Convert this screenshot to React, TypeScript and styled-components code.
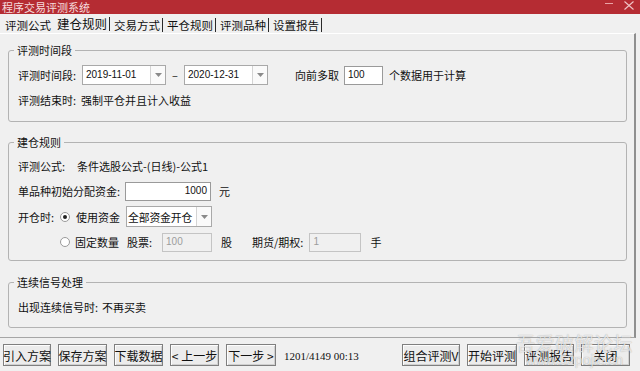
import React from "react"
import styled, { createGlobalStyle } from "styled-components"

const GlobalStyle = createGlobalStyle`
  html, body {
    margin: 0;
    padding: 0;
    background: #f0f0f0;
  }
  body {
    font-family: "Noto Sans CJK SC", "Noto Sans", sans-serif;
    font-size: 11px;
    color: #111;
  }
`

const TABS = ["评测公式", "建仓规则", "交易方式", "平仓规则", "评测品种", "设置报告"]

const Arrow = () => (
  <svg width="7" height="4" viewBox="0 0 7 4">
    <path d="M0 0 L7 0 L3.5 4 Z" fill="#8a8a8a" />
  </svg>
)

const App: React.FC = () => {
  return (
    <S.Window>
      <GlobalStyle />
      <S.TitleBar>
        <S.Title>程序交易评测系统</S.Title>
        <S.Minimize />
        <svg width="10" height="9" viewBox="0 0 10 9">
          <path d="M0.5 0.5 L9.5 8.5 M9.5 0.5 L0.5 8.5" stroke="#f1c4c6" strokeWidth="1.1" />
        </svg>
      </S.TitleBar>

      <S.TabStrip>
        {TABS.map((t, i) => (
          <S.Tab key={t} $active={i === 1} $sep={i >= 1}>
            {t}
          </S.Tab>
        ))}
      </S.TabStrip>

      <S.Panel>
        <S.Group>
          <S.Legend>评测时间段</S.Legend>
          <S.GroupBody $pt={8} $pb={14} $gap={8}>
            <S.Row $h={20}>
              <S.Label $w={64}>评测时间段:</S.Label>
              <S.Combo $w={84}>
                <S.ComboText>2019-11-01</S.ComboText>
                <S.ComboButton>
                  <Arrow />
                </S.ComboButton>
              </S.Combo>
              <S.Dash>–</S.Dash>
              <S.Combo $w={84}>
                <S.ComboText>2020-12-31</S.ComboText>
                <S.ComboButton>
                  <Arrow />
                </S.ComboButton>
              </S.Combo>
              <S.Text $ml={27}>向前多取</S.Text>
              <S.Input $w={39} $ml={5}>100</S.Input>
              <S.Text $ml={6}>个数据用于计算</S.Text>
            </S.Row>
            <S.Row $h={14}>
              <S.Label $w={63}>评测结束时:</S.Label>
              <S.Text>强制平仓并且计入收益</S.Text>
            </S.Row>
          </S.GroupBody>
        </S.Group>

        <S.Group $mt={13}>
          <S.Legend>建仓规则</S.Legend>
          <S.GroupBody $pt={7} $pb={8} $gap={5}>
            <S.Row $h={20}>
              <S.Label $w={59}>评测公式:</S.Label>
              <S.Text>条件选股公式-(日线)-公式1</S.Text>
            </S.Row>
            <S.Row $h={20}>
              <S.Label $w={107}>单品种初始分配资金:</S.Label>
              <S.Input $w={86} $right>1000</S.Input>
              <S.Text $ml={8}>元</S.Text>
            </S.Row>
            <S.Row $h={21}>
              <S.Label $w={42}>开仓时:</S.Label>
              <S.Radio $checked />
              <S.Text $ml={6}>使用资金</S.Text>
              <S.Combo $w={86} $ml={6}>
                <S.ComboText $cjk>全部资金开仓</S.ComboText>
                <S.ComboButton>
                  <Arrow />
                </S.ComboButton>
              </S.Combo>
            </S.Row>
            <S.Row $h={20}>
              <S.Label $w={42} />
              <S.Radio />
              <S.Text $ml={5}>固定数量</S.Text>
              <S.Text $ml={8}>股票:</S.Text>
              <S.Input $w={50} $ml={10} $disabled>100</S.Input>
              <S.Text $ml={9}>股</S.Text>
              <S.Text $ml={20}>期货/期权:</S.Text>
              <S.Input $w={52} $ml={6} $disabled>1</S.Input>
              <S.Text $ml={9}>手</S.Text>
            </S.Row>
          </S.GroupBody>
        </S.Group>

        <S.Group $mt={14}>
          <S.Legend>连续信号处理</S.Legend>
          <S.GroupBody $pt={11} $pb={13} $gap={0}>
            <S.Row $h={14}>
              <S.Label $w={84}>出现连续信号时:</S.Label>
              <S.Text>不再买卖</S.Text>
            </S.Row>
          </S.GroupBody>
        </S.Group>
      </S.Panel>

      <S.BottomBar>
        <S.Button $w={48}>引入方案</S.Button>
        <S.Button $w={49}>保存方案</S.Button>
        <S.Button $w={49}>下载数据</S.Button>
        <S.Button $w={49}>&lt; 上一步</S.Button>
        <S.Button $w={50}>下一步 &gt;</S.Button>
        <S.Counter>1201/4149 00:13</S.Counter>
        <S.Spacer />
        <S.Button $w={58}>组合评测V</S.Button>
        <S.Button $w={50}>开始评测</S.Button>
        <S.Button $w={50}>评测报告</S.Button>
        <S.Button $w={49}>关闭</S.Button>
      </S.BottomBar>

      <S.Watermark aria-hidden>
        <S.WatermarkBig>吾爱破解论坛</S.WatermarkBig>
        <S.WatermarkSmall>www.52pojie.cn</S.WatermarkSmall>
      </S.Watermark>
    </S.Window>
  )
}

const S = {
  Window: styled.div`
    position: relative;
    width: 640px;
    height: 371px;
    display: flex;
    flex-direction: column;
    overflow: hidden;
    background: #f0f0f0;
  `,
  TitleBar: styled.div`
    height: 14px;
    flex: none;
    display: flex;
    align-items: center;
    padding: 0 6px 0 2px;
    background: #b52c33;
    color: #f6dcdd;
    font-size: 11px;
    line-height: 14px;
    svg {
      margin-top: -4px;
      margin-left: 11px;
    }
  `,
  Title: styled.div`
    flex: 1;
    margin-top: -1px;
  `,
  Minimize: styled.div`
    width: 8px;
    height: 1px;
    margin-top: -7px;
    background: #eaa3a6;
  `,
  TabStrip: styled.div`
    height: 19px;
    flex: none;
    display: flex;
    align-items: center;
    padding: 2px 0 0 1px;
    box-sizing: border-box;
  `,
  Tab: styled.div<{ $active?: boolean; $sep?: boolean }>`
    height: 14px;
    line-height: 14px;
    font-size: ${(p) => (p.$active ? "12.5px" : "11.5px")};
    padding: 0 2px 0 4px;
    margin-top: ${(p) => (p.$active ? "-2px" : "0")};
    border-right: ${(p) => (p.$sep ? "1px solid #2a2a2a" : "none")};
    color: #111;
    white-space: nowrap;
  `,
  Panel: styled.div`
    flex: 1;
    display: flex;
    flex-direction: column;
    margin-right: 4px;
    padding: 9px 7px 0 8px;
    border-top: 1px solid #ffffff;
    border-bottom: 1px solid #a6a6a6;
    border-right: 2px solid #8f8f8f;
  `,
  Group: styled.fieldset<{ $mt?: number }>`
    margin: ${(p) => p.$mt ?? 0}px 0 0 0;
    padding: 0 9px;
    border: 1px solid #b3b3b3;
    border-radius: 3px;
    min-width: 0;
  `,
  Legend: styled.legend`
    margin-left: -4px;
    padding: 0 3px;
    font-size: 11px;
    line-height: 14px;
    color: #111;
  `,
  GroupBody: styled.div<{ $pt: number; $pb: number; $gap: number }>`
    display: flex;
    flex-direction: column;
    gap: ${(p) => p.$gap}px;
    padding: ${(p) => p.$pt}px 0 ${(p) => p.$pb}px;
  `,
  Row: styled.div<{ $h: number }>`
    display: flex;
    align-items: center;
    height: ${(p) => p.$h}px;
    line-height: 14px;
    white-space: nowrap;
  `,
  Label: styled.span<{ $w: number }>`
    width: ${(p) => p.$w}px;
    flex: none;
  `,
  Text: styled.span<{ $ml?: number }>`
    margin-left: ${(p) => p.$ml ?? 0}px;
  `,
  Dash: styled.span`
    width: 18px;
    text-align: center;
  `,
  Combo: styled.div<{ $w: number; $ml?: number }>`
    width: ${(p) => p.$w}px;
    height: 100%;
    margin-left: ${(p) => p.$ml ?? 0}px;
    box-sizing: border-box;
    display: flex;
    border: 1px solid #a9a9a9;
    background: #ffffff;
  `,
  ComboText: styled.span<{ $cjk?: boolean }>`
    flex: 1;
    min-width: 0;
    display: flex;
    align-items: center;
    padding-left: ${(p) => (p.$cjk ? 1 : 3)}px;
    font-family: ${(p) => (p.$cjk ? `"Noto Sans CJK SC", sans-serif` : `"Liberation Sans", Arial, sans-serif`)};
    font-size: ${(p) => (p.$cjk ? 10.8 : 10)}px;
    letter-spacing: ${(p) => (p.$cjk ? "-0.1px" : "0")};
  `,
  ComboButton: styled.span`
    width: 14px;
    flex: none;
    display: flex;
    align-items: center;
    justify-content: center;
    border-left: 1px solid #d4d4d4;
    background: #fafafa;
  `,
  Input: styled.div<{ $w: number; $ml?: number; $right?: boolean; $disabled?: boolean }>`
    width: ${(p) => p.$w}px;
    height: 19px;
    margin-left: ${(p) => p.$ml ?? 0}px;
    box-sizing: border-box;
    display: flex;
    align-items: center;
    justify-content: ${(p) => (p.$right ? "flex-end" : "flex-start")};
    padding: 0 3px;
    border: 1px solid ${(p) => (p.$disabled ? "#c4c4c4" : "#9a9a9a")};
    background: ${(p) => (p.$disabled ? "#f0f0f0" : "#ffffff")};
    color: ${(p) => (p.$disabled ? "#9c9c9c" : "#111")};
    font-family: "Liberation Sans", Arial, sans-serif;
    font-size: 10px;
    overflow: hidden;
  `,
  Radio: styled.span<{ $checked?: boolean }>`
    width: 10px;
    height: 10px;
    flex: none;
    box-sizing: border-box;
    border-radius: 50%;
    border: 1px solid #9a9a9a;
    background: #ffffff;
    display: flex;
    align-items: center;
    justify-content: center;
    &::after {
      content: "";
      width: 4px;
      height: 4px;
      border-radius: 50%;
      background: ${(p) => (p.$checked ? "#222" : "transparent")};
    }
  `,
  BottomBar: styled.div`
    height: 33px;
    flex: none;
    display: flex;
    align-items: flex-start;
    gap: 7px;
    padding: 6px 10px 0 3px;
    box-sizing: border-box;
  `,
  Button: styled.div<{ $w: number }>`
    width: ${(p) => p.$w}px;
    height: 22px;
    flex: none;
    box-sizing: border-box;
    display: flex;
    align-items: center;
    justify-content: center;
    border: 1px solid #7f7f7f;
    background: #ececec;
    box-shadow: inset 1px 1px #fdfdfd, inset -1px -1px #d0d0d0;
    font-size: 12px;
    white-space: nowrap;
    color: #111;
  `,
  Counter: styled.span`
    margin: 5px 0 0 1px;
    font-family: "Liberation Serif", "Times New Roman", serif;
    font-size: 11px;
    line-height: 14px;
  `,
  Spacer: styled.div`
    flex: 1;
  `,
  Watermark: styled.div`
    position: absolute;
    right: 7px;
    bottom: 4px;
    display: flex;
    flex-direction: column;
    align-items: center;
    color: rgba(255, 255, 255, 0.72);
    text-shadow: 0 0 1px rgba(0, 0, 0, 0.35);
    pointer-events: none;
  `,
  WatermarkBig: styled.span`
    font-size: 19px;
    line-height: 21px;
    letter-spacing: 0.5px;
  `,
  WatermarkSmall: styled.span`
    font-family: "Liberation Sans", Arial, sans-serif;
    font-size: 14px;
    line-height: 14px;
  `,
}

export default App
